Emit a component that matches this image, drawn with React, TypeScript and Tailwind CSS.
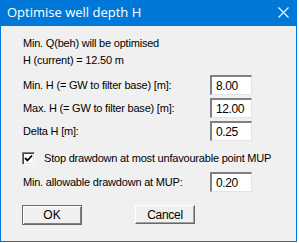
import React from "react";

const font = { fontFamily: '"Liberation Sans", Arial, sans-serif' };
const txt = "text-[11px] leading-none tracking-[-0.2px]";

function Field({ value }: { value: string }) {
  return (
    <div className="w-[42px] h-[20px] bg-white border-t-2 border-l-2 border-t-[#808080] border-l-[#808080] border-b border-r border-b-[#e3e3e3] border-r-[#e3e3e3] flex items-center pl-[4px] text-[12px] leading-none tracking-[-0.4px] text-black">
      {value}
    </div>
  );
}

function Row({ label, value, mt }: { label: string; value: string; mt: string }) {
  return (
    <div className={`grid grid-cols-[187px_42px] items-center h-[20px] ${mt}`}>
      <div className={txt}>{label}</div>
      <Field value={value} />
    </div>
  );
}

export default function App() {
  return (
    <div className="w-[299px] h-[243px] bg-white" style={font}>
      <div className="w-[297px] h-[242px] bg-[#f0f0f0] border-x border-b border-[#0078d7] flex flex-col">
        <div className="h-[26px] bg-[#0078d7] flex items-center justify-between pl-[6px] pr-[7px] shrink-0">
          <span className="text-white text-[13px] leading-none pb-[1px]" style={{ fontFamily: '"Open Sans", "Noto Sans", sans-serif' }}>
            Optimise well depth H
          </span>
          <svg width="11" height="11" viewBox="0 0 11 11" className="mb-[1px]">
            <path d="M0.5 0.5 L10.5 10.5 M10.5 0.5 L0.5 10.5" stroke="white" strokeWidth="1.1" />
          </svg>
        </div>
        <div className="pl-[22px] pt-[9px] text-black">
          <div className={`h-[17px] flex items-center ${txt}`}>Min. Q(beh) will be optimised</div>
          <div className={`h-[17px] flex items-center ${txt}`}>H (current) = 12.50 m</div>
          <Row label="Min. H (= GW to filter base) [m]:" value="8.00" mt="mt-[6px]" />
          <Row label="Max. H (= GW to filter base) [m]:" value="12.00" mt="mt-[3px]" />
          <Row label="Delta H [m]:" value="0.25" mt="mt-[3px]" />
          <div className="mt-[7px] h-[20px] flex items-center">
            <div className="w-[13px] h-[13px] ml-[-1px] bg-white border-t border-l border-t-[#808080] border-l-[#808080] border-b border-r border-b-white border-r-white shadow-[inset_1px_1px_0_#404040,inset_-1px_-1px_0_#e3e3e3] flex items-center justify-center">
              <svg width="9" height="9" viewBox="0 0 9 9">
                <path d="M1 4 L3.5 6.5 L8 1.5" stroke="black" strokeWidth="1.8" fill="none" />
              </svg>
            </div>
            <span className={`ml-[9px] whitespace-nowrap ${txt}`}>Stop drawdown at most unfavourable point MUP</span>
          </div>
          <Row label="Min. allowable drawdown at MUP:" value="0.20" mt="mt-[4px]" />
          <div className="mt-[13px] flex ml-[-1px]">
            <button className="w-[60px] h-[20px] bg-[#f0f0f0] border border-[#696969] shadow-[inset_1px_1px_0_#ffffff,inset_-1px_-1px_0_#808080] text-[12px] leading-none text-black flex items-center justify-center">
              OK
            </button>
            <button className="ml-[53px] w-[60px] h-[19px] bg-[#f0f0f0] border-t border-l border-t-white border-l-white border-b border-r border-b-[#696969] border-r-[#696969] shadow-[inset_-1px_-1px_0_#a0a0a0] text-[12px] leading-none tracking-[-0.3px] text-black flex items-center justify-center">
              Cancel
            </button>
          </div>
        </div>
      </div>
    </div>
  );
}
